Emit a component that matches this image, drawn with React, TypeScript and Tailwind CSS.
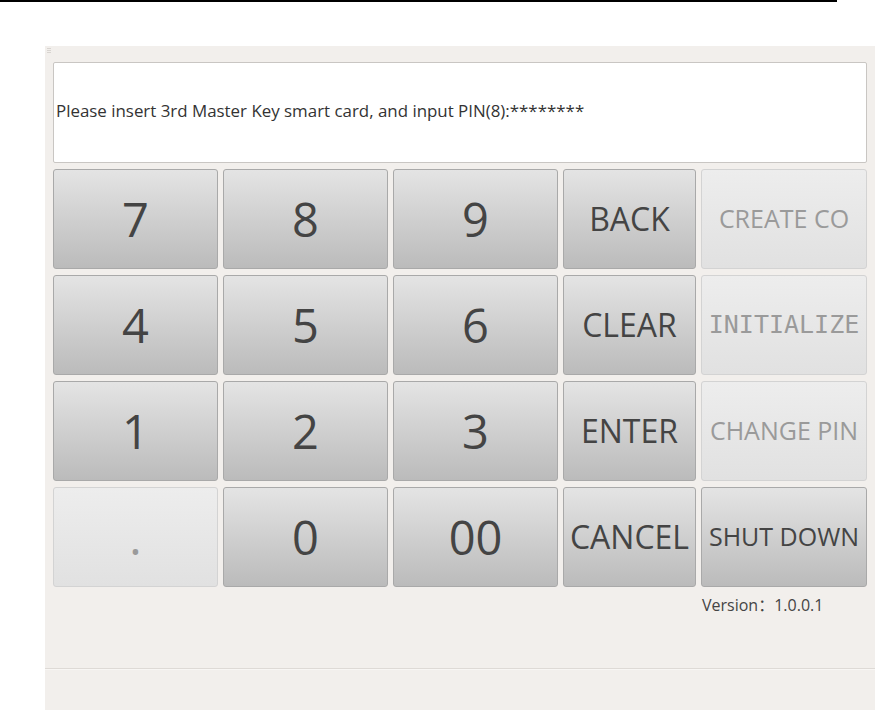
const keys: { label: string; kind: 'digit' | 'action' | 'side' | 'mono'; disabled?: boolean }[] = [
  { label: '7', kind: 'digit' },
  { label: '8', kind: 'digit' },
  { label: '9', kind: 'digit' },
  { label: 'BACK', kind: 'action' },
  { label: 'CREATE CO', kind: 'side', disabled: true },
  { label: '4', kind: 'digit' },
  { label: '5', kind: 'digit' },
  { label: '6', kind: 'digit' },
  { label: 'CLEAR', kind: 'action' },
  { label: 'INITIALIZE', kind: 'mono', disabled: true },
  { label: '1', kind: 'digit' },
  { label: '2', kind: 'digit' },
  { label: '3', kind: 'digit' },
  { label: 'ENTER', kind: 'action' },
  { label: 'CHANGE PIN', kind: 'side', disabled: true },
  { label: '.', kind: 'digit', disabled: true },
  { label: '0', kind: 'digit' },
  { label: '00', kind: 'digit' },
  { label: 'CANCEL', kind: 'action' },
  { label: 'SHUT DOWN', kind: 'side' },
]

function Key({ label, kind, disabled }: { label: string; kind: string; disabled?: boolean }) {
  const size =
    kind === 'digit'
      ? 'text-[47px]'
      : kind === 'action'
        ? 'text-[32px]'
        : kind === 'mono'
          ? "text-[25px] font-['DejaVu_Sans_Mono',monospace]"
          : 'text-[25px]'
  const look = disabled
    ? 'bg-gradient-to-b from-[#ededed] to-[#e1e1e1] border-[#d3d3d3] text-[#9a9a9a]'
    : 'bg-gradient-to-b from-[#e4e4e4] to-[#bbbbbb] border-[#a9a9a9] text-[#444444]'
  return (
    <div
      className={`flex items-center justify-center rounded-[3px] border whitespace-nowrap overflow-hidden ${look} ${size}`}
    >
      {label}
    </div>
  )
}

export default function App() {
  return (
    <div className="w-[875px] h-[710px] bg-white font-['Open_Sans',sans-serif] overflow-hidden">
      <div className="h-[2px] w-[837px] bg-black" />

      <div className="relative mt-[44px] ml-[45px] h-[664px] bg-[#f2efec] flex flex-col">
        {/* tiny grip mark */}
        <div className="absolute left-[2px] top-[2px] flex flex-col gap-[1px]">
          <div className="w-[4px] h-px bg-[#d8d4d0]" />
          <div className="w-[4px] h-px bg-[#d8d4d0]" />
          <div className="w-[4px] h-px bg-[#d8d4d0]" />
        </div>

        {/* Prompt */}
        <div className="mt-[16px] ml-[8px] w-[814px] h-[101px] bg-white border border-[#c9c6c3] rounded-[2px] flex items-center pl-[2px] pb-[3px] text-[16.9px] text-[#333333] whitespace-nowrap">
          Please insert 3rd Master Key smart card, and input PIN(8):********
        </div>

        {/* Keypad */}
        <div className="mt-[6px] ml-[8px] grid grid-cols-[165px_165px_165px_133px_166px] grid-rows-[100px_100px_100px_100px] gap-x-[5px] gap-y-[6px]">
          {keys.map((k) => (
            <Key key={k.label} label={k.label} kind={k.kind} disabled={k.disabled} />
          ))}
        </div>

        {/* Version */}
        <div className="mt-[6px] ml-[657px] h-[22px] leading-[22px] text-[16px] text-[#444444] whitespace-nowrap">
          Version<span className="font-['Noto_Sans_CJK_SC',sans-serif]">：</span>1.0.0.1
        </div>

        <div className="mt-[53px] h-px bg-[#dedad6]" />
        <div className="h-px bg-[#f8f6f4]" />
      </div>
    </div>
  )
}
